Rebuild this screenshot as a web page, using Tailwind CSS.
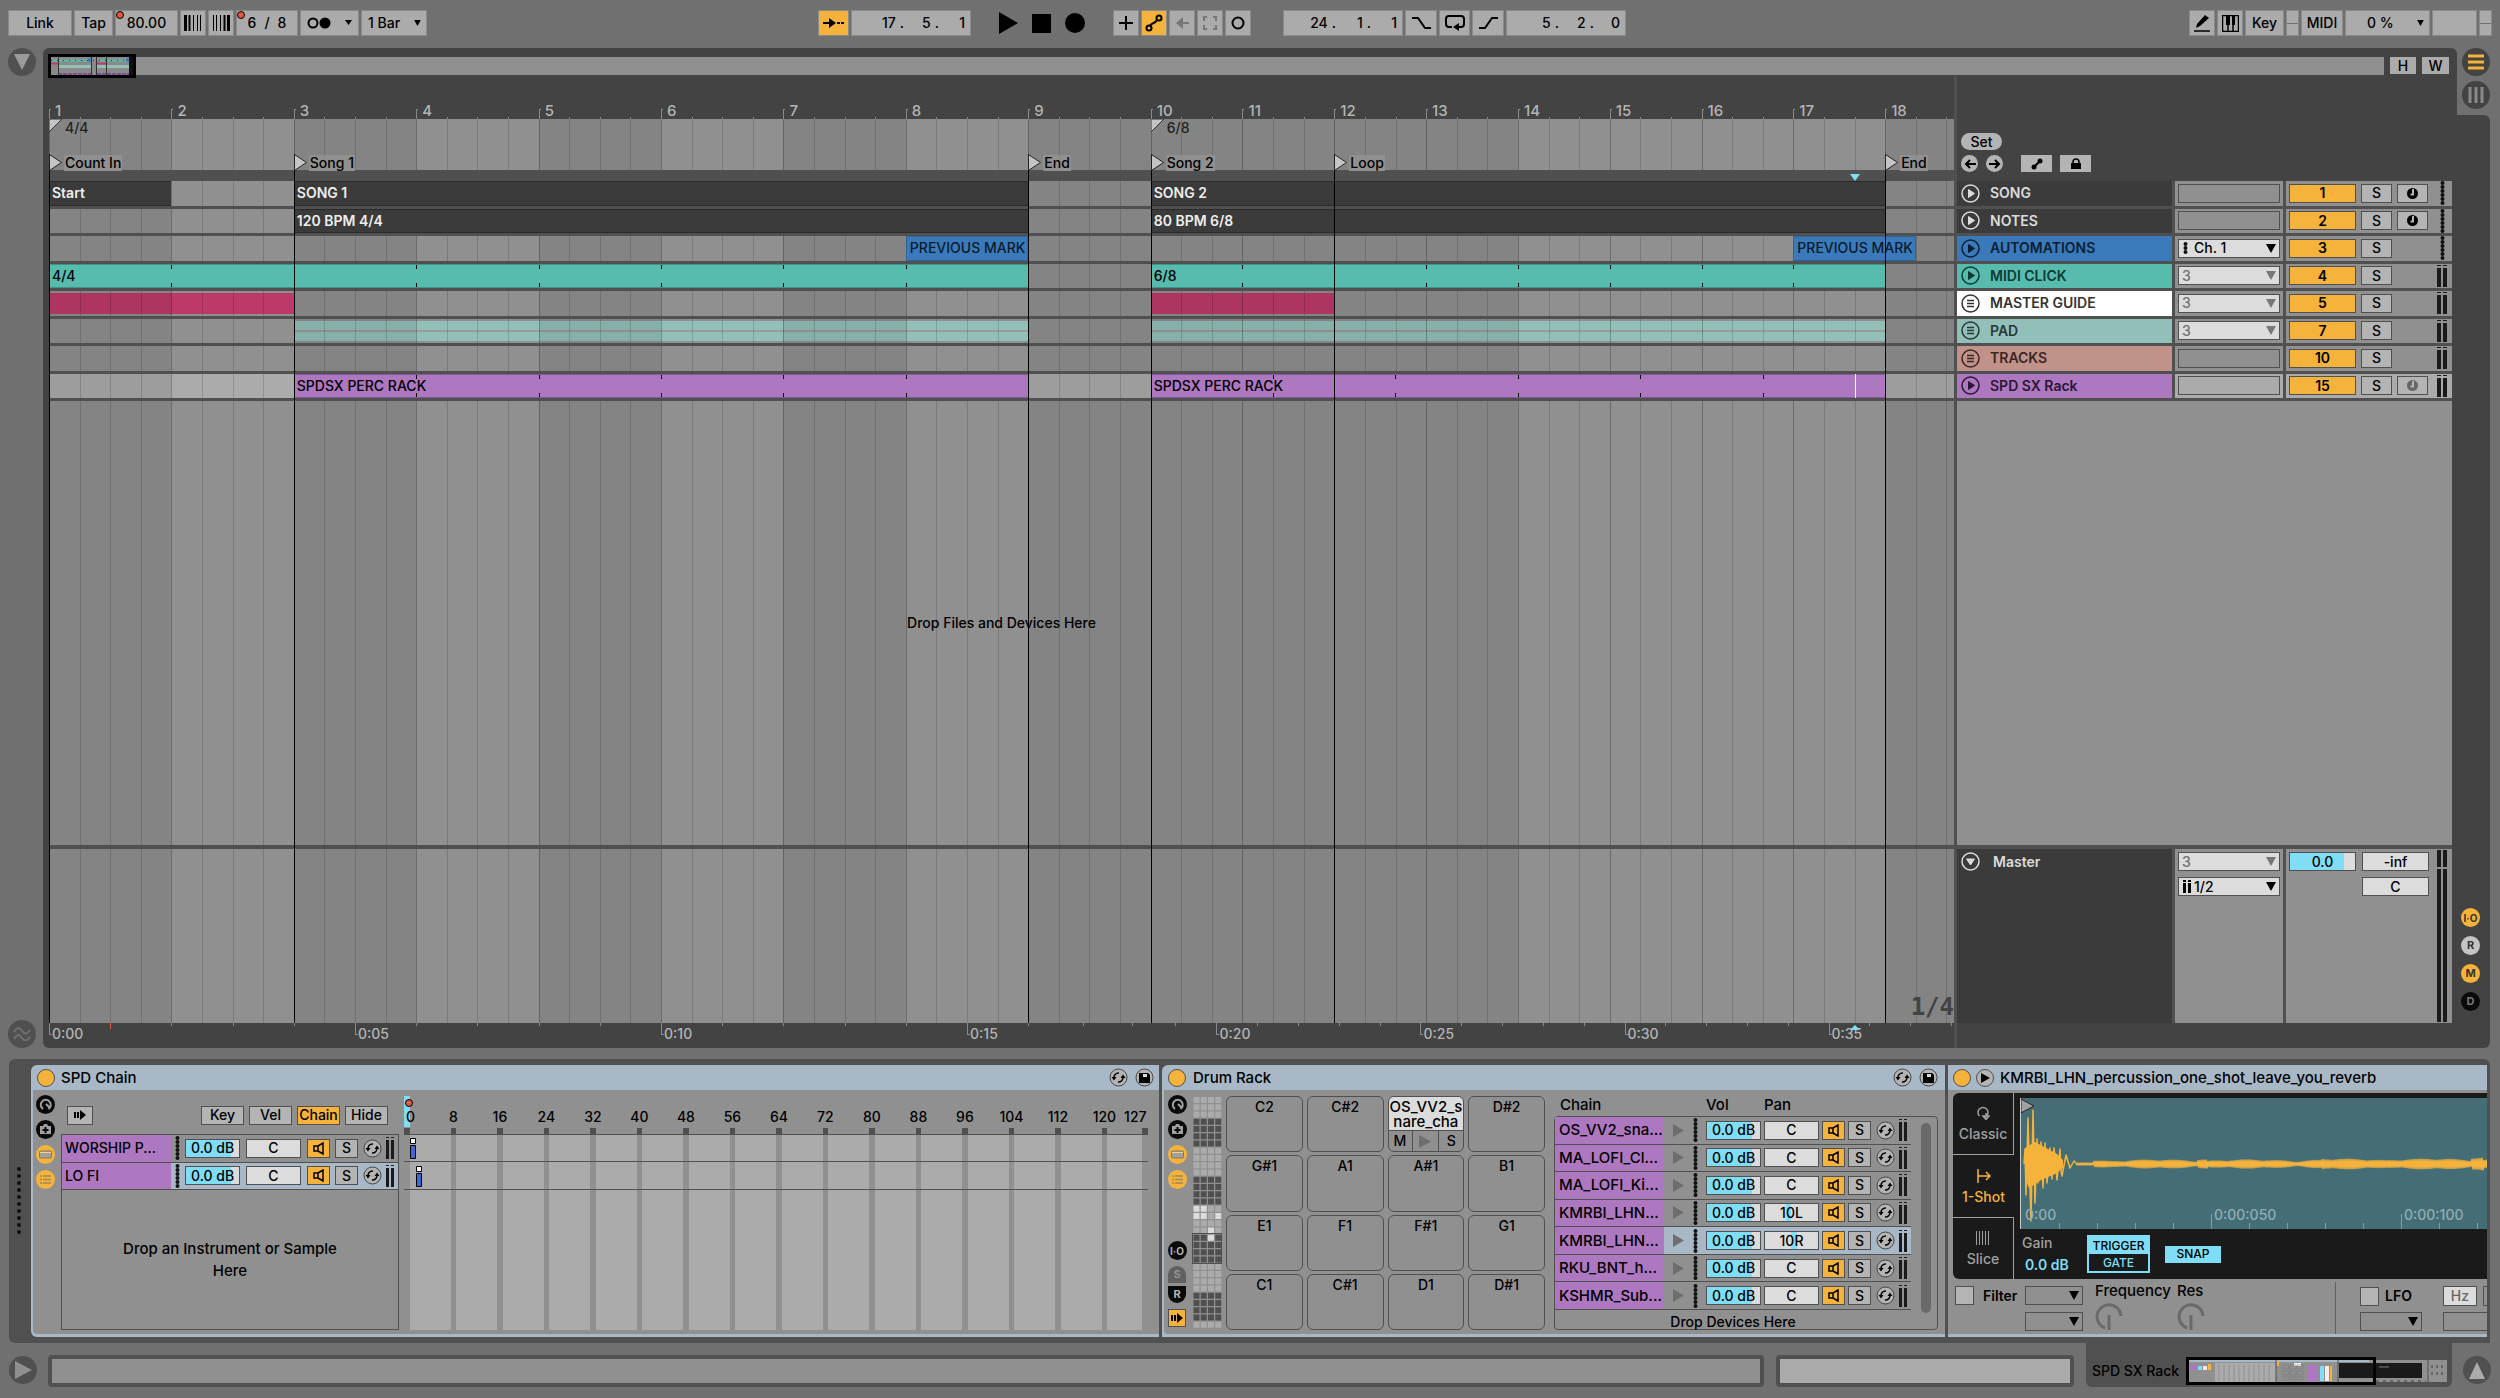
<!DOCTYPE html>
<html lang="en">
<head>
<meta charset="utf-8">
<title>SPD SX Rack</title>
<script src="https://cdn.jsdelivr.net/npm/@tailwindcss/browser@4"></script>
</head>
<body class="flex min-h-screen flex-col overflow-x-hidden bg-[#707070] font-['Inter',sans-serif] text-sm leading-5 font-medium text-black">

<header id="toolbar" class="flex h-12 items-start px-2 pt-[10px]"></header>

<main class="flex flex-1 pr-[10px]">
  <div class="flex w-[43px] flex-col items-center justify-between">
    <button aria-label="Show browser" class="flex size-7 items-center justify-center rounded-full bg-[#505050]"><svg width="16" height="16"><path d="M0 0h16L8 16z" fill="#9a9a9a"/></svg></button>
    <button aria-label="Groove pool" class="flex size-7 items-center justify-center rounded-full bg-[#505050]"><svg width="18" height="14" fill="none" stroke="#707070" stroke-width="2"><path d="M1 5c3-5 5-5 8-1s5 3 8-1M1 12c3-5 5-5 8-1s5 3 8-1"/></svg></button>
  </div>

  <section aria-label="Arrangement" class="flex min-w-0 flex-1 flex-col rounded-l-md rounded-tr-md bg-[#434343]">
    <div class="flex h-7 items-start gap-[6px] pt-[9px] pr-2 pl-[6px]">
      <div class="relative h-[18px] flex-1 bg-[#909090]">
        <div class="absolute -top-[3px] -left-px h-6 w-[88px] border-[3px] border-black bg-[#8a8a8a]">
          <svg class="block size-full" viewBox="0 0 82 18" preserveAspectRatio="none">
            <path d="M0 3.500h40M48 3.500h30" stroke="#57bcae" stroke-width="2"/>
            <path d="M0 3.500h78" stroke="#3b3b3b" stroke-dasharray="1 5"/>
            <path d="M0 6.500h7M46 6.500h10" stroke="#bd396a" stroke-width="2"/>
            <path d="M7 9.500h33M46 9.500h32" stroke="#93bfb9" stroke-width="3"/>
            <path d="M7 17h33M46 17h32" stroke="#7d4f8f" stroke-width="2" stroke-dasharray="4 1"/>
            <path d="M37 3h3M75 3h3" stroke="#3a7abb" stroke-width="3"/>
            <path d="M7.500 0v18M40.500 0v18M45.500 0v18M55.500 0v18" stroke="#333"/>
            <path d="M78 0h4v18h-4z" fill="#111"/>
          </svg>
        </div>
      </div>
      <button class="h-[17px] w-[26px] bg-[#ababab] leading-4">H</button>
      <button class="h-[17px] w-[27px] bg-[#ababab] leading-4">W</button>
    </div>
    <div class="flex flex-1">
      <div class="flex min-w-0 flex-1 flex-col pl-[6px]">
        <div id="ruler" class="relative h-[43px] text-[15px] text-[#b4b4b4]"></div>
        <div class="relative flex flex-1 flex-col overflow-hidden bg-[#909090]">
          <div id="grid" class="pointer-events-none absolute inset-0 z-10"></div>
          <div id="markers" class="pointer-events-none absolute inset-0 z-30"></div>
          <div class="h-[51px]"></div>
          <div class="relative z-20 h-[11px] bg-[#505050]"></div>
          <div id="lanes" class="grid h-[220px] grid-rows-8"></div>
          <div class="relative z-20 flex flex-1 items-center justify-center"><span>Drop Files and Devices Here</span></div>
          <div class="relative z-20 h-1 bg-[#505050]"></div>
          <div class="relative z-20 flex h-[174px] items-end justify-end pb-1 font-['DejaVu_Sans_Mono',monospace] text-2xl leading-6 font-bold text-[#434343]"><span>1/4</span></div>
        </div>
        <div id="seconds" class="relative h-[25px] text-[#b4b4b4]"></div>
      </div>

      <div class="flex w-[503px] flex-col border-l-[3px] border-[#505050] pr-[5px]">
        <div class="flex h-[105px] flex-col justify-end gap-[5px] pb-[9px] pl-1">
          <button class="h-[17px] w-[41px] rounded-full bg-[#b4b4b4] leading-4">Set</button>
          <div class="flex items-center">
            <button aria-label="Previous locator" class="mr-2 flex size-[17px] items-center justify-center rounded-full bg-[#b4b4b4]"><svg width="12" height="10" fill="none" stroke="#000" stroke-width="2"><path d="M12 5H2M6 1L2 5l4 4"/></svg></button>
            <button aria-label="Next locator" class="mr-[18px] flex size-[17px] items-center justify-center rounded-full bg-[#b4b4b4]"><svg width="12" height="10" fill="none" stroke="#000" stroke-width="2"><path d="M0 5h10M6 1l4 4-4 4"/></svg></button>
            <button aria-label="Automation mode" class="mr-[8px] flex h-[17px] w-[31px] items-center justify-center bg-[#b4b4b4]"><svg width="12" height="12"><path d="M3 9l6-6" stroke="#000" stroke-width="2"/><circle cx="3" cy="9" r="2.500"/><circle cx="9" cy="3" r="2.500"/></svg></button>
            <button aria-label="Lock envelopes" class="flex h-[17px] w-[31px] items-center justify-center bg-[#b4b4b4]"><svg width="12" height="12"><path d="M1 5h10v6H1z"/><path d="M3 6V4a3 3 0 0 1 6 0v2" fill="none" stroke="#000" stroke-width="1.500"/></svg></button>
          </div>
        </div>
        <div id="tracks" class="grid h-[220px] grid-rows-8 bg-[#505050]"></div>
        <div class="flex-1 bg-[#909090]"></div>
        <div class="h-1 bg-[#505050]"></div>
        <div id="master" class="flex h-[174px] gap-[3px] bg-[#505050]"></div>
        <div class="h-[25px]"></div>
      </div>
    </div>
  </section>

  <aside class="flex w-[33px] flex-col">
    <div class="flex h-[67px] flex-col items-end gap-[5px]">
      <button aria-label="Arrangement view" class="flex size-7 items-center justify-center rounded-full bg-[#434343]"><svg width="16" height="16"><path d="M0 2h16M0 8h16M0 14h16" stroke="#f6b33c" stroke-width="3"/></svg></button>
      <button aria-label="Session view" class="flex size-7 items-center justify-center rounded-full bg-[#434343]"><svg width="16" height="16"><path d="M2 0v16M8 0v16M14 0v16" stroke="#8a8a8a" stroke-width="3"/></svg></button>
    </div>
    <div class="flex flex-1 flex-col items-start justify-end gap-[9px] rounded-r-md bg-[#434343] pb-[37px] pl-1 text-[11px] leading-none font-bold text-[#333]">
      <button class="size-[19px] rounded-full bg-[#f6b33c] text-[10px]">I·O</button>
      <button class="size-[19px] rounded-full bg-[#c4c4c4]">R</button>
      <button class="size-[19px] rounded-full bg-[#f6b33c]">M</button>
      <button class="size-[19px] rounded-full bg-[#0a0a0a] text-[#777]">D</button>
    </div>
  </aside>
</main>

<section aria-label="Devices" class="mt-[11px] mr-[10px] ml-[9px] flex h-[284px] gap-[3px] overflow-hidden rounded-md rounded-br-none bg-[#505050] pt-[6px] pr-[3px] pb-[6px]">
  <div class="flex w-[19px] items-center justify-center"><svg width="4" height="68"><path d="M2 2v66" stroke="#111" stroke-width="4" stroke-linecap="round" stroke-dasharray="0 7"/></svg></div>

  <article class="flex min-w-0 flex-1 flex-col rounded-l-md bg-[#a8b8c6] pb-[3px] pl-[2px]">
    <div class="flex h-[25px] items-center pr-[5px] pl-[4px]">
      <button aria-label="Device on" class="mr-[6px] size-[18px] rounded-full border border-[#505050] bg-[#f6b33c]"></button>
      <h2 class="flex-1 text-[15px]">SPD Chain</h2>
      <span class="ico-swap mr-[7px] flex"></span><span class="ico-save flex"></span>
    </div>
    <div class="flex min-h-0 flex-1 rounded-bl bg-[#909090] pb-1">
      <div class="rail mr-[3px] flex w-[25px] flex-col items-center gap-[6px] pt-[5px]"></div>
      <div class="flex w-[338px] flex-col">
        <div class="flex h-11 items-center pr-[11px] pl-[6px] pb-[6px] pt-[12px]">
          <button aria-label="Auto select" class="mr-auto flex h-[19px] w-[26px] items-center justify-center border border-[#505050] bg-[#b4b4b4]"><svg width="12" height="10"><path d="M1 2v6M4 2v6" stroke="#000" stroke-width="2"/><path d="M6 0l6 5-6 5z"/></svg></button>
          <div class="flex gap-[5px]">
            <button class="h-[19px] w-[43px] border border-[#505050] bg-[#b4b4b4] leading-4">Key</button>
            <button class="h-[19px] w-[43px] border border-[#505050] bg-[#b4b4b4] leading-4">Vel</button>
            <button class="h-[19px] w-[43px] border border-[#505050] bg-[#f6b33c] leading-4">Chain</button>
            <button class="h-[19px] w-[43px] border border-[#505050] bg-[#b4b4b4] leading-4">Hide</button>
          </div>
        </div>
        <div class="flex flex-1 flex-col border border-[#505050]">
          <div id="chains1"></div>
          <div class="flex flex-1 items-center justify-center text-center text-[15px] leading-[22px]">Drop an Instrument or Sample<br>Here</div>
        </div>
      </div>
      <div id="zones" class="relative mr-[11px] ml-[5px] flex-1"></div>
    </div>
  </article>

  <article class="flex w-[783px] shrink-0 flex-col rounded-tl-md bg-[#a8b8c6] pb-[3px] pl-[2px]">
    <div class="flex h-[25px] items-center pr-[7px] pl-[4px]">
      <button aria-label="Device on" class="mr-[7px] size-[18px] rounded-full border border-[#505050] bg-[#f6b33c]"></button>
      <h2 class="flex-1 text-[15px]">Drum Rack</h2>
      <span class="ico-swap mr-[7px] flex"></span><span class="ico-save flex"></span>
    </div>
    <div class="flex min-h-0 flex-1 rounded-bl bg-[#909090] pb-1">
      <div class="mr-[2px] flex w-[26px] flex-col items-center">
        <div class="rail flex flex-col items-center gap-[6px] pt-[5px]"></div>
        <div class="mt-auto flex flex-col items-center pb-[3px] text-[11px] leading-none font-bold text-[#b4b4b4]">
          <button class="mb-[6px] size-[19px] rounded-full bg-[#0a0a0a] text-[10px]">I·O</button>
          <button class="mb-[3px] h-[17px] w-[18px] rounded-t-full bg-[#606060] text-[#909090]">S</button>
          <button class="mb-[6px] h-[17px] w-[18px] rounded-b-full bg-[#0a0a0a]">R</button>
          <button aria-label="Auto select" class="flex size-[18px] items-center justify-center border border-[#505050] bg-[#f6b33c]"><svg width="12" height="10"><path d="M1 2v6M4 2v6" stroke="#000" stroke-width="2"/><path d="M6 0l6 5-6 5z"/></svg></button>
        </div>
      </div>
      <svg id="padmap" class="mt-[6px] mr-[4px]" width="30" height="235"></svg>
      <div id="pads" class="mt-[6px] grid w-[319px] grid-cols-4 grid-rows-4 gap-x-1 gap-y-[3px] text-center"></div>
      <div class="ml-[9px] flex w-[384px] flex-col">
        <div class="flex h-[26px] items-center pt-1 pl-[6px] text-[15px]"><span class="w-[146px]">Chain</span><span class="w-[58px]">Vol</span><span>Pan</span></div>
        <div class="flex min-h-0 flex-1 rounded border border-[#505050]">
          <div class="w-[356px]"><div id="chains2"></div><div class="pt-1 text-center leading-4">Drop Devices Here</div></div>
          <div class="mt-[6px] ml-[10px] h-[190px] w-[10px] rounded-full bg-[#6a6a6a]"></div>
        </div>
      </div>
    </div>
  </article>

  <article class="flex w-[539px] shrink-0 flex-col bg-[#a8b8c6] pb-[3px]">
    <div class="flex h-[25px] items-center pl-[5px]">
      <button aria-label="Device on" class="mr-[5px] size-[18px] rounded-full border border-[#505050] bg-[#f6b33c]"></button>
      <button aria-label="Preview" class="mr-[6px] flex size-[18px] items-center justify-center rounded-full border border-[#505050] bg-[#b4b4b4]"><svg width="9" height="10"><path d="M0 0l9 5-9 5z"/></svg></button>
      <h2 class="text-[15px] whitespace-nowrap">KMRBI_LHN_percussion_one_shot_leave_you_reverb</h2>
    </div>
    <div class="flex min-h-0 flex-1 flex-col bg-[#909090] pt-[3px] pl-[5px]">
      <div class="flex h-[186px] rounded-l-md bg-[#1a1a1a] text-[#a0a0a0]">
        <div class="grid w-[61px] grid-rows-3 text-center">
          <button class="flex flex-col items-center justify-center gap-1 border-r border-b border-[#a0a0a0] pt-[3px]"><svg width="14" height="14" fill="none" stroke="#a0a0a0" stroke-width="1.500"><path d="M3.500 10a5 5 0 1 1 7 0H6M10 7v3l-1 3M7 10h6l-3 3.500z"/></svg>Classic</button>
          <button class="flex flex-col items-center justify-center gap-1 pt-[3px] text-[#f6b33c]"><svg width="14" height="14" fill="none" stroke="#f6b33c" stroke-width="1.500"><path d="M1 0v14M1 7h11M9 3l4 4-4 4"/></svg>1-Shot</button>
          <button class="flex flex-col items-center justify-center gap-1 border-t border-r border-[#a0a0a0] pt-[3px]"><svg width="14" height="14" stroke="#a0a0a0"><path d="M.500 0v14M3.500 0v14M6.500 0v14M9.500 0v14M12.500 0v14"/></svg>Slice</button>
        </div>
        <div class="flex min-w-0 flex-1 flex-col pt-[5px] pl-[6px]">
          <svg id="wave" class="block border-l border-[#ccc] bg-[#456d76]" width="467" height="131"></svg>
          <div class="flex flex-1 items-center pl-[2px]">
            <label class="flex w-[65px] flex-col gap-[2px]"><span>Gain</span><input value="0.0 dB" class="w-[60px] bg-transparent pl-[3px] font-semibold text-[#7fddf5]"></label>
            <div class="mr-[15px] flex h-[38px] w-[63px] flex-col border-2 border-[#7fddf5] text-xs leading-none">
              <button class="flex-1 bg-[#7fddf5] text-black">TRIGGER</button>
              <button class="flex-1 text-[#7fddf5]">GATE</button>
            </div>
            <button class="h-[17px] w-14 bg-[#7fddf5] text-xs leading-none text-black">SNAP</button>
          </div>
        </div>
      </div>
      <div class="flex flex-1 pt-[7px] pl-[2px]">
        <label class="flex h-[19px] w-[70px] items-center gap-[9px] font-semibold"><input type="checkbox" class="size-[19px] appearance-none border border-[#505050] bg-[#b4b4b4]">Filter</label>
        <div id="filtersel" class="mr-3 flex flex-col gap-[7px]"></div>
        <div class="flex w-[82px] flex-col text-[15px]"><span class="-mt-[5px]">Frequency</span><svg width="28" height="30" fill="none" stroke="#6a6a6a" stroke-width="3"><path d="M10 27a12 12 0 1 1 16-12M14 14v15"/></svg></div>
        <div class="flex flex-col text-[15px]"><span class="-mt-[5px]">Res</span><svg width="28" height="30" fill="none" stroke="#6a6a6a" stroke-width="3"><path d="M10 27a12 12 0 1 1 16-12M14 14v15"/></svg></div>
        <div class="-mt-1 mr-6 ml-auto w-px bg-[#606060]"></div>
        <div class="flex w-[83px] flex-col gap-[6px]"><label class="flex h-5 items-center gap-[6px] font-semibold"><input type="checkbox" class="size-[19px] appearance-none border border-[#505050] bg-[#b4b4b4]">LFO</label><div id="lfosel"></div></div>
        <div class="flex w-[44px] flex-col gap-[6px] overflow-hidden">
          <div class="flex gap-[6px]"><button class="h-5 w-[34px] shrink-0 border border-[#505050] bg-[#dcdcdc] leading-4 text-[#666]">Hz</button><button aria-label="Sync" class="h-5 w-5 shrink-0 border border-[#505050]"></button></div>
          <input aria-label="LFO rate" class="h-[19px] w-20 border border-[#505050]">
        </div>
      </div>
    </div>
  </article>
</section>

<footer class="flex h-[55px] items-start pr-[9px] pl-[9px]">
  <button aria-label="Show help" class="mt-[13px] flex size-7 items-center justify-center rounded-full bg-[#505050]"><svg width="17" height="18"><path d="M0 0l17 9-17 9z" fill="#909090"/></svg></button>
  <div class="mt-3 ml-[11px] h-8 flex-1 rounded border-4 border-[#505050] bg-[#909090]"></div>
  <div class="mt-3 ml-3 h-8 w-[298px] rounded border-4 border-[#505050] bg-[#ababab]"></div>
  <div class="ml-3 flex h-11 w-[366px] items-center rounded-b-md bg-[#505050] pt-[12px] pl-[6px]">
    <span class="w-[94px]">SPD SX Rack</span>
    <svg width="261" height="28">
      <path d="M3 3h258v22H3z" fill="#909090"/><path d="M3 3h180v2H3z" fill="#a8b8c6"/>
      <path d="M29 6h61v19H29z" fill="#ababab"/>
      <path d="M33 8v17M38 8v17M43 8v17M48 8v17M53 8v17M58 8v17M63 8v17M68 8v17M73 8v17M78 8v17M83 8v17" stroke="#909090"/>
      <path d="M3 8h8v5H3zM122 8h9v17h-9z" fill="#ad78c0"/>
      <path d="M12 9h4v4h-4zM134 9h4v15h-4zM163 18h7v2h-7z" fill="#7fddf5"/>
      <path d="M17 9h4v4h-4zM139 9h4v15h-4zM108 6h7v3h-7z" fill="#eee"/>
      <path d="M22 7h3v6h-3zM144 9h2v15h-2zM91 4h2v5h-2zM218 18h7v1h-7zM228 18h5v1h-5z" fill="#f6b33c"/>
      <path d="M97 8h6v4h-6zM104 8h6v4h-6zM111 8h6v4h-6zM97 14h6v4h-6zM104 14h6v4h-6zM111 14h6v4h-6zM97 20h6v3h-6zM104 20h6v3h-6zM111 20h6v3h-6z" fill="none" stroke="#777" stroke-width=".5"/>
      <path d="M153 6h83v15h-83z" fill="#1a1a1a"/><path d="M193 10h10" stroke="#777"/>
      <path d="M90 3v22M152 3v22M242 3v22" stroke="#505050"/>
      <path d="M190 24h50M246 8v14M251 8v14M256 8v14" stroke="#666" stroke-width="2" stroke-dasharray="3 4"/>
      <path d="M1.500 1.500h187v25h-187z" fill="none" stroke="#000" stroke-width="3"/>
    </svg>
  </div>
  <button aria-label="Hide device view" class="mt-[13px] ml-[11px] flex size-7 items-center justify-center rounded-full bg-[#505050]"><svg width="16" height="17"><path d="M8 0l8 17H0z" fill="#ababab"/></svg></button>
</footer>

<script>
const $ = id => document.getElementById(id);
const caret = (c = '#000', w = 10) => `<svg width="${w}" height="${w - 1}" viewBox="0 0 10 9"><path d="M0 0h10L5 9z" fill="${c}"/></svg>`;

/* ---------- control bar ---------- */
const btn = (cls, label, inner) => `<button ${label ? `aria-label="${label}"` : ''} class="relative flex h-[26px] items-center justify-center border border-[#8a8a8a] ${cls}">${inner}</button>`;
const G = 'bg-[#ababab]', O = 'bg-[#f6b33c]';
const icon = (d, w = 18, h = 18, sw = 2, c = '#000') => `<svg width="${w}" height="${h}" fill="none" stroke="${c}" stroke-width="${sw}"><path d="${d}"/></svg>`;
const dot = '<span class="absolute top-0 left-0 size-2 rounded-full border border-black bg-[#e5573f]"></span>';
const drop = (cls, label, text) => `<div class="relative flex h-[26px] items-center border border-[#8a8a8a] bg-[#ababab] ${cls}"><select aria-label="${label}" class="size-full appearance-none px-[6px]"><option>${text}</option></select><span class="pointer-events-none absolute right-[5px]">${caret('#000', 7)}</span></div>`;
const unit = (n, w, p = '.') => `<span class="flex ${w} justify-end gap-1"><span>${n}</span>${p ? `<span>${p}</span>` : ''}</span>`;
const pos = (label, a, b, c) => `<div role="group" aria-label="${label}" class="flex h-[26px] w-[120px] items-center justify-end border border-[#8a8a8a] bg-[#ababab] pr-[5px]">${unit(a, 'w-[35px]')}${unit(b, 'w-[35px]')}${unit(c, 'w-[26px]', '')}</div>`;
$('toolbar').innerHTML = `
<div class="flex flex-1 gap-[2px]">
  ${btn('w-[64px] ' + G, '', 'Link')}${btn('w-[39px] ' + G, '', 'Tap')}${btn('w-[63px] ' + G, 'Tempo', dot + '80.00')}
  ${btn('w-[26px] ' + G, 'Nudge down', '<svg width="18" height="16" stroke="#000"><path d="M1.500 0v16" stroke-width="3"/><path d="M5.500 0v16" stroke-width="2"/><path d="M9.500 0v16M13.500 0v16M16.500 0v16"/></svg>')}
  ${btn('w-[26px] ' + G, 'Nudge up', '<svg width="18" height="16" stroke="#000"><path d="M16.500 0v16" stroke-width="3"/><path d="M12.500 0v16" stroke-width="2"/><path d="M8.500 0v16M4.500 0v16M1.500 0v16"/></svg>')}
  ${btn('w-[62px] gap-2 ' + G, 'Time signature', dot + '<span>6</span><span>/</span><span>8</span>')}
  ${btn('w-[59px] ' + G, 'Metronome', '<svg width="46" height="12"><circle cx="6" cy="6" r="4.500" fill="none" stroke="#000" stroke-width="2"/><circle cx="18" cy="6" r="5.500"/><path d="M38 3h7l-3.500 5z"/></svg>')}
  ${drop('w-[66px]', 'Quantization', '1 Bar')}
</div>
<div class="flex items-start pr-14">
  ${btn('w-[31px] mr-[2px] ' + O, 'Follow', '<svg width="22" height="12"><path d="M0 5h6V1l7 5-7 5V7H0zM14 5h3v2h-3zM18 5h3v2h-3z"/></svg>')}
  ${pos('Position', 17, 5, 1)}
  <div class="mr-[28px] ml-[28px] flex h-[26px] items-center gap-[14px]">
    <button aria-label="Play"><svg class="block" width="19" height="22"><path d="M0 0l19 11L0 22z"/></svg></button>
    <button aria-label="Stop"><svg class="block" width="19" height="19"><path d="M0 0h19v19H0z"/></svg></button>
    <button aria-label="Record"><svg class="block" width="20" height="20"><circle cx="10" cy="10" r="10"/></svg></button>
  </div>
  <div class="mr-8 flex gap-[2px]">
    ${btn('w-[26px] ' + G, 'Overdub', icon('M7 0v14M0 7h14', 14, 14))}
    ${btn('w-[26px] ' + O, 'Automation arm', '<svg width="18" height="18" fill="none" stroke="#000" stroke-width="2"><circle cx="4" cy="14" r="2.500"/><circle cx="14" cy="4" r="2.500"/><path d="M5 12c2-4 5-2 7-6"/></svg>')}
    ${btn('w-[26px] ' + G, 'Re-enable automation', '<svg width="13" height="12"><path d="M4 6h9" stroke="#777" stroke-width="2"/><path d="M0 6l7-6v12z" fill="#777"/></svg>')}
    ${btn('w-[26px] ' + G, 'Capture', icon('M1 5V1h3M10 1h3v4M13 9v4h-3M4 13H1V9', 14, 14, 2, '#777'))}
    ${btn('w-[26px] ' + G, 'Session record', '<svg width="14" height="14"><circle cx="7" cy="7" r="5.500" fill="none" stroke="#000" stroke-width="2"/></svg>')}
  </div>
  <div class="flex gap-[2px]">
    ${pos('Loop start', 24, 1, 1)}
    ${btn('w-[32px] ' + G, 'Punch in', icon('M0 3h6l7 10h6', 19, 16))}
    ${btn('w-[31px] ' + G, 'Loop', '<svg width="20" height="18"><path d="M7 13H4a3 3 0 0 1-3-3V5a3 3 0 0 1 3-3h12a3 3 0 0 1 3 3v5a3 3 0 0 1-3 3h-2" fill="none" stroke="#000" stroke-width="2"/><path d="M14 9v8l-6-4z"/></svg>')}
    ${btn('w-[32px] ' + G, 'Punch out', icon('M0 13h6l7-10h6', 19, 16))}
    ${pos('Loop length', 5, 2, 0)}
  </div>
</div>
<div class="flex flex-1 justify-end gap-[2px]">
  ${btn('w-[26px] ' + G, 'Draw mode', '<svg width="18" height="18"><path d="M3 14l1-4L12 1l4 3-9 8z"/><path d="M1 17h16" stroke="#000" stroke-width="1.500"/></svg>')}
  ${btn('w-[26px] ' + G, 'Computer MIDI keyboard', '<svg width="17" height="17"><path d="M.500 .500h16v16H.500zM6 0v17M11 0v17" fill="none" stroke="#000" stroke-width="1.500"/><path d="M4 0h4v10H4zM10 0h3v10h-3z"/></svg>')}
  ${btn('w-[39px] ' + G, '', 'Key')}
  <div class="flex h-[26px] w-[13px] flex-col border border-[#8a8a8a] bg-[#ababab]"><div class="flex-1 border-b border-[#707070]"></div><div class="flex-1"></div></div>
  ${btn('w-[42px] ' + G, '', 'MIDI')}
  <div class="relative flex h-[26px] w-[85px] items-center border border-[#8a8a8a] bg-[#ababab]"><select aria-label="CPU load" class="size-full appearance-none pl-[21px]"><option>0 %</option></select><span class="pointer-events-none absolute right-[5px]">${caret('#000', 7)}</span></div>
  <div class="h-[26px] w-[45px] border border-[#8a8a8a] bg-[#ababab]"></div>
  <div class="flex h-[26px] w-[13px] flex-col border border-[#8a8a8a] bg-[#ababab]"><div class="flex-1 border-b border-[#707070]"></div><div class="flex-1"></div></div>
</div>`;

/* ---------- timeline: positions are in quarter notes ---------- */
const SPAN = 62.25, P = q => (q / SPAN * 100) + '%';
const bars = [];
for (let b = 1; b <= 18; b++) bars.push([b, b <= 10 ? (b - 1) * 4 : 36 + (b - 10) * 3]);
let r = '';
for (let q = 0; q <= 62; q++) r += `<i class="absolute bottom-0 h-[2px] w-px bg-[#8a8a8a]" style="left:${P(q)}"></i>`;
for (const [b, q] of bars) r += `<div class="absolute bottom-0 flex h-[10px] items-end" style="left:${P(q)}"><i class="h-[10px] w-[2px] border-t border-l border-[#8a8a8a]"></i><span class="ml-1 leading-4">${b}</span></div>`;
$('ruler').innerHTML = r;

let g = '';
for (const [a, b] of [[0, 4], [8, 12], [16, 20], [24, 28], [32, 48], [60, SPAN]]) g += `<i class="absolute inset-y-0 bg-black/8" style="left:${P(a)};width:${P(b - a)}"></i>`;
for (let q = 0; q <= 62; q++) g += `<i class="absolute inset-y-0 w-px ${bars.some(x => x[1] === q) ? 'bg-black/25' : 'bg-black/15'}" style="left:${P(q)}"></i>`;
$('grid').innerHTML = g;

let m = '';
for (const [q, t] of [[0, '4/4'], [36, '6/8']]) m += `<div class="absolute top-0 flex" style="left:${P(q)}"><svg width="16" height="14"><path d="M0 0h13L0 13z" fill="#c4c4c4" stroke="#333"/></svg><span class="-mt-px text-[#222]">${t}</span></div>`;
for (const [q, t] of [[0, 'Count In'], [8, 'Song 1'], [32, 'End'], [36, 'Song 2'], [42, 'Loop'], [60, 'End']])
  m += `<i class="absolute top-[35px] bottom-0 w-px bg-black" style="left:${P(q)}"></i><div class="absolute top-[35px] flex items-center whitespace-nowrap" style="left:${P(q)}"><svg width="14" height="17"><path d="M.500 .500l12 8-12 8z" fill="#c4c4c4" stroke="#222"/></svg><span class="ml-px bg-[#909090] pr-px pl-px leading-4">${t}</span></div>`;
m += `<svg class="absolute top-[55px] -translate-x-1/2" style="left:${P(59)}" width="10" height="7"><path d="M0 0h10L5 7z" fill="#7fddf5"/></svg>`;
$('markers').innerHTML = m;

const C = {
  dark: 'bg-[#3b3b3b] border-y border-[#2a2a2a] text-[#eee] font-semibold z-20',
  blue: 'bg-[#3a7abb] border border-[#2c649c] text-[#0a1a2a] z-20',
  teal: 'bg-[#57bcae] border-y border-[#3f9488] z-20',
  purple: 'bg-[#ad78c0] border-y border-[#84589a] z-20',
  pink: 'my-[2px] bg-[#bd396a]',
  pad: 'my-[2px] bg-[linear-gradient(#93bfb9_47%,#9a9a9a_47%,#9a9a9a_55%,#93bfb9_55%)]'
};
const fourths = a => a.map(b => b * 4);
const lanes = [
  [[0, 4, 'dark', 'Start'], [8, 32, 'dark', 'SONG 1'], [36, 60, 'dark', 'SONG 2']],
  [[8, 32, 'dark', '120 BPM 4/4'], [36, 60, 'dark', '80 BPM 6/8']],
  [[28, 32, 'blue', 'PREVIOUS MARK'], [57, 61, 'blue', 'PREVIOUS MARK']],
  [[0, 32, 'teal', '4/4', fourths([1, 2, 3, 4, 5, 6, 7])], [36, 60, 'teal', '6/8', [39, 45, 48, 51, 54, 57]]],
  [[0, 8, 'pink', ''], [36, 42, 'pink', '']],
  [[8, 32, 'pad', ''], [36, 60, 'pad', '']],
  [],
  [[8, 32, 'purple', 'SPDSX PERC RACK', fourths([3, 4, 5, 6, 7])], [36, 60, 'purple', 'SPDSX PERC RACK', [40, 44, 48, 52, 56]]]
];
$('lanes').innerHTML = lanes.map((clips, i) => `<div class="relative flex flex-col ${i === 7 ? 'bg-[#ababab]' : ''}">
  <div class="relative flex-1">${clips.map(([a, b, k, t, ticks = []]) => `<div class="absolute inset-y-0 flex items-center overflow-hidden whitespace-nowrap pl-[3px] ${C[k]}" style="left:${P(a)};width:${P(b - a)}">${t}${ticks.map(q => `<i class="absolute inset-y-0 w-px border-y-4 border-black" style="left:${(q - a) / (b - a) * 100}%"></i>`).join('')}</div>`).join('')}
  ${i === 7 ? `<i class="absolute inset-y-0 z-30 w-px bg-white" style="left:${P(59)}"></i>` : ''}</div>
  <div class="relative z-20 h-[3px] bg-[#505050]"></div></div>`).join('');

/* seconds ruler: 120 BPM up to bar 9, easing into 80 BPM */
const secPos = s => s <= 16 ? s * 2 : s < 20 ? [33.8, 35.4, 36.8][s - 17] : 38.15 + (s - 20) * 4 / 3;
let sr = '';
for (let s = 0; s <= 38; s++) sr += s % 5
  ? `<i class="absolute top-0 w-px ${s === 1 ? 'h-[6px] bg-[#e5573f]' : 'h-[3px] bg-[#8a8a8a]'}" style="left:${P(secPos(s))}"></i>`
  : `<div class="absolute top-0 flex" style="left:${P(secPos(s))}"><i class="h-[12px] w-[3px] border-b border-l border-[#8a8a8a]"></i><span class="pt-px">0:${String(s).padStart(2, '0')}</span></div>`;
sr += `<svg class="absolute top-[2px] -translate-x-1/2" style="left:${P(59)}" width="10" height="5"><path d="M0 5h10L5 0z" fill="#7fddf5"/></svg>`;
$('seconds').innerHTML = sr;

/* ---------- track headers ---------- */
const beads = n => `<svg width="5" height="${n * 4}"><path d="M2.500 2v${n * 4 - 3}" stroke="#111" stroke-width="4" stroke-linecap="round" stroke-dasharray="0 4"/></svg>`;
const meter = '<svg width="10" height="22"><path d="M0 0h4v1H0zM6 0h4v1H6zM0 3h4v19H0zM6 3h4v19H6z" fill="#1a1a1a"/></svg>';
const box = (cls, t, label = t) => `<button aria-label="${label}" class="flex h-[19px] items-center justify-center border border-[#505050] ${cls}">${t}</button>`;
const io = (t, off, lead = '') => `<div class="relative flex h-[19px] w-[102px] items-center border border-[#505050] bg-[#dcdcdc] ${off ? 'text-[#707070]' : 'text-black'}">${lead ? `<span class="absolute left-1 flex">${lead}</span>` : ''}<select aria-label="Output" class="h-[17px] w-full appearance-none leading-4 ${lead ? 'pl-[15px]' : 'pl-[3px]'}"><option>${t}</option></select><span class="pointer-events-none absolute right-[3px] flex">${caret(off ? '#777' : '#000')}</span></div>`;
const arm = c => `<svg width="11" height="11"><circle cx="5.500" cy="5.500" r="5.500" fill="${c}"/><path d="M6 1v5.500H3.500" stroke="#b4b4b4" stroke-width="2" fill="none"/></svg>`;
const T = [
  ['SONG', 'bg-[#3b3b3b] text-[#dcdcdc]', 1, 'midi', '', '#000'], ['NOTES', 'bg-[#3b3b3b] text-[#dcdcdc]', 2, 'midi', '', '#000'],
  ['AUTOMATIONS', 'bg-[#3a7abb] text-[#0a1f33]', 3, 'midi', 'ch'], ['MIDI CLICK', 'bg-[#57bcae] text-[#0f3a34]', 4, 'audio', '3'],
  ['MASTER GUIDE', 'bg-white text-[#333]', 5, 'audio', '3', '', 1], ['PAD', 'bg-[#93bfb9] text-[#263a37]', 7, 'audio', '3', '', 1],
  ['TRACKS', 'bg-[#c0928a] text-[#3a2724]', 10, 'audio', '', '', 1], ['SPD SX Rack', 'bg-[#ad78c0] text-[#2c1735]', 15, 'audio', '', '#666']
];
const tIcon = d => `<svg width="19" height="19" fill="none" stroke="currentColor"><circle cx="9.500" cy="9.500" r="8.500" stroke-width="1.500"/><path d="${d}" ${d.includes('z') ? 'fill="currentColor"' : 'stroke-width="1.500"'}/></svg>`;
$('tracks').innerHTML = T.map(([n, c, num, kind, out, a, group], i) => {
  const bg = i === 7 ? 'bg-[#ababab]' : 'bg-[#909090]';
  return `<div class="flex gap-[3px] pb-[3px]">
  <div class="flex w-[215px] items-center gap-[10px] pl-1 font-semibold ${c}">${tIcon(group ? 'M6 6.500h7M6 9.500h7M6 12.500h7' : 'M7.500 5.500l6 4-6 4z')}<span>${n}</span></div>
  <div class="flex w-[108px] items-center pl-[3px] ${bg}">${out === 'ch' ? io('Ch. 1', 0, beads(3)) : out ? io(out, 1) : '<div class="h-[19px] w-[102px] border border-[#505050]"></div>'}</div>
  <div class="flex flex-1 items-center pl-[3px] ${bg}">${box('w-[67px] mr-[5px] bg-[#f6b33c] font-semibold', num, 'Track ' + num)}${box('w-[31px] mr-[5px] bg-[#b4b4b4]', 'S', 'Solo ' + n)}<div class="w-[31px]">${a ? box('w-[31px] bg-[#b4b4b4]', arm(a), 'Arm ' + n) : ''}</div>
  <div class="ml-auto flex w-[20px] justify-center">${kind === 'midi' ? beads(6) : meter}</div></div></div>`;
}).join('');
$('master').innerHTML = `
<div class="flex w-[215px] items-start gap-[13px] bg-[#3b3b3b] pt-[3px] pl-1 font-semibold text-[#dcdcdc]">${tIcon('M5.500 7h8l-4 6z')}<span>Master</span></div>
<div class="flex w-[108px] flex-col gap-[6px] bg-[#909090] pt-[3px] pl-[3px]">${io('3', 1)}${io('1/2', 0, '<svg width="8" height="13"><path d="M0 0h3v2H0zM5 0h3v2H5zM0 3h3v10H0zM5 3h3v10H5z"/></svg>')}</div>
<div class="flex flex-1 items-start bg-[#909090] pt-[3px] pl-[3px]">${box('w-[67px] mr-[6px] bg-[linear-gradient(to_right,#7fddf5_83%,#dcdcdc_83%)]', '0.0', 'Master volume')}
<div class="flex flex-col gap-[6px]">${box('w-[67px] bg-[#dcdcdc]', '-inf', 'Peak level')}${box('w-[67px] bg-[#dcdcdc]', 'C', 'Master pan')}</div>
<div class="-mt-[2px] ml-auto mr-[5px] flex gap-[2px]"><div class="h-[172px] w-1 bg-[linear-gradient(#1a1a1a_17px,#909090_17px,#909090_19px,#1a1a1a_19px)]"></div><div class="h-[172px] w-1 bg-[linear-gradient(#1a1a1a_17px,#909090_17px,#909090_19px,#1a1a1a_19px)]"></div></div></div>`;

/* ---------- devices ---------- */
const swap = '<button aria-label="Hot-swap" class="block shrink-0"><svg class="block" width="19" height="19"><circle cx="9.500" cy="9.500" r="8.500" fill="#b4b4b4" stroke="#444"/><path d="M5 10a4.500 4.500 0 0 1 5-5M14 9a4.500 4.500 0 0 1-5 5" fill="none" stroke="#000" stroke-width="1.500"/><path d="M2.500 9h5L5 12.500zM11.500 10h5L14 6.500z"/></svg></button>';
const save = '<button aria-label="Save preset" class="block"><svg class="block" width="19" height="19"><circle cx="9.500" cy="9.500" r="8.500" fill="#b4b4b4" stroke="#444"/><path d="M4 5h9l2 2v8H4z"/><path d="M8 6h4v3H8z" fill="#ddd"/></svg></button>';
document.querySelectorAll('.ico-swap').forEach(e => e.innerHTML = swap);
document.querySelectorAll('.ico-save').forEach(e => e.innerHTML = save);
const rail = [
  ['Macros', '<circle cx="9.500" cy="9.500" r="9.500" fill="#0a0a0a"/><path d="M7 14a5 5 0 1 1 5.500 0M10 9l4 4" fill="none" stroke="#a0a0a0" stroke-width="2"/>'],
  ['Variations', '<circle cx="9.500" cy="9.500" r="9.500" fill="#0a0a0a"/><path d="M4 6h3l1-2h3l1 2h3v8H4z" fill="#a0a0a0"/><path d="M9.500 7v6M6.500 10h6" stroke="#0a0a0a" stroke-width="2"/>'],
  ['Chain devices', '<circle cx="9.500" cy="9.500" r="9.500" fill="#f6b33c"/><rect x="3.500" y="6" width="12" height="7" rx="1" fill="#a0a0a0" stroke="#8f7a4a"/><path d="M4 7.500h11" stroke="#f6d58c"/>'],
  ['Chain list', '<circle cx="9.500" cy="9.500" r="9.500" fill="#f6b33c"/><path d="M4 6h2M7 6h8M4 9.500h2M7 9.500h8M4 13h2M7 13h8" stroke="#a08a58" stroke-width="1.500"/>']
];
document.querySelectorAll('.rail').forEach(e => e.innerHTML = rail.map(([n, s]) => `<button aria-label="${n}"><svg class="block" width="19" height="19">${s}</svg></button>`).join(''));

const spk = '<svg width="12" height="13" fill="none" stroke="#000" stroke-width="1.500"><path d="M1 4h4v5H1zM5 4l5-3v11L5 9"/></svg>';
const pans = { C: 'bg-[#dcdcdc]', '10L': 'bg-[linear-gradient(to_right,#dcdcdc_39%,#7fddf5_39%,#7fddf5_50%,#dcdcdc_50%)]', '10R': 'bg-[linear-gradient(to_right,#dcdcdc_50%,#7fddf5_50%,#7fddf5_61%,#dcdcdc_61%)]' };
const chain = (n, pan, sel, drum) => `<div class="flex h-full items-center border-b border-[#505050] ${sel ? 'bg-[#a8b8c6]' : ''}">
  <span class="flex h-full w-[109px] shrink-0 items-center overflow-hidden bg-[#ad78c0] whitespace-nowrap ${drum ? 'pl-1 text-[15px]' : 'pl-[3px]'}">${n}</span>
  ${drum ? `<button aria-label="Preview ${n}" class="ml-[9px]"><svg class="block" width="11" height="13"><path d="M0 0l11 6.500L0 13z" fill="#6e6e6e"/></svg></button><span class="ml-[9px]">${beads(6)}</span>` : `<span class="ml-1">${beads(6)}</span>`}
  <input aria-label="Volume ${n}" value="0.0 dB" class="h-[19px] w-[55px] border border-[#505050] bg-[linear-gradient(to_right,#7fddf5_85%,#dcdcdc_85%)] pl-[5px] ${drum ? 'ml-[8px] mr-[3px]' : 'ml-[5px] mr-[6px]'}">
  <input aria-label="Pan ${n}" value="${pan}" class="h-[19px] w-[55px] border border-[#505050] text-center ${pans[pan]} ${drum ? 'mr-[3px]' : 'mr-[6px]'}">
  ${box('w-[23px] bg-[#f6b33c] ' + (drum ? 'mr-[3px]' : 'mr-[5px]'), spk, 'Activate ' + n)}${box('w-[23px] bg-[#b4b4b4] mr-[5px]', 'S', 'Solo ' + n)}${swap}
  <svg class="ml-1" width="8" height="22"><path d="M0 0h3v1H0zM5 0h3v1H5zM0 3h3v19H0zM5 3h3v19H5z" fill="#1a1a1a"/></svg></div>`;
$('chains1').className = 'grid h-[55px] grid-rows-2';
$('chains1').innerHTML = chain('WORSHIP P...', 'C') + chain('LO FI', 'C', true);
$('chains2').className = 'grid h-[193px] grid-rows-7';
$('chains2').innerHTML = [['OS_VV2_sna...', 'C'], ['MA_LOFI_Cl...', 'C'], ['MA_LOFI_Ki...', 'C'], ['KMRBI_LHN...', '10L'], ['KMRBI_LHN...', '10R', true], ['RKU_BNT_h...', 'C'], ['KSHMR_Sub...', 'C']].map(([n, p, s]) => chain(n, p, s, true)).join('');

/* chain selector zones, 128 columns */
const Z = n => (n / 128 * 100) + '%';
let z = '<div class="absolute inset-x-0 top-11 bottom-0 border-t border-l border-[#505050] bg-[#ababab]"></div><i class="absolute left-0 top-[6px] h-[31px] w-[6px] bg-[#7fddf5]"></i>';
for (const n of [0, 8, 16, 24, 32, 40, 48, 56, 64, 72, 80, 88, 96, 104, 112, 120, 127]) {
  z += `<i class="absolute top-[45px] bottom-0 bg-[#909090]" style="left:${Z(n)};width:${Z(1)}"></i><i class="absolute top-[38px] h-[6px] bg-[#505050]" style="left:${Z(n)};width:${Z(1)}"></i>`;
  z += `<span class="absolute top-[17px] ${n === 127 ? '-translate-x-[21px]' : n ? '-translate-x-1/2' : '-translate-x-px'}" style="left:${Z(n + .5)}">${n}</span>`;
}
z += '<i class="absolute inset-x-0 top-[71px] h-px bg-[#505050]"></i><i class="absolute inset-x-0 top-[99px] h-px bg-[#505050]"></i><span class="absolute top-[9px] left-[1px] size-2 rounded-full border border-black bg-[#e5573f]"></span>';
z += `<svg class="absolute top-12" style="left:${Z(1)}" width="6" height="22"><path d="M.500 .500h5v5h-5z" fill="#fff" stroke="#000"/><path d="M.500 7.500h5v13h-5z" fill="#3c68d8" stroke="#000"/></svg><svg class="absolute top-[76px]" style="left:${Z(2)}" width="6" height="22"><path d="M.500 .500h5v5h-5z" fill="#fff" stroke="#000"/><path d="M.500 7.500h5v13h-5z" fill="#3c68d8" stroke="#000"/></svg>`;
$('zones').innerHTML = z;

/* pad overview */
let pm = '';
const lit = ['15,0', '15,1', '16,0', '16,1', '16,3', '18,2', '19,2'];
for (let y = 0; y < 32; y++) for (let x = 0; x < 4; x++) {
  const dark = Math.floor((y + 1) / 4) % 2 === 1;
  pm += `<rect x="${1.5 + x * 7.25}" y="${1 + y * 7.25}" width="6" height="6" fill="${lit.includes(y + ',' + x) ? '#dcdcdc' : dark ? '#505050' : '#ababab'}"/>`;
}
pm += '<rect x=".5" y="137.500" width="29" height="30" fill="none" stroke="#505050"/>';
$('padmap').innerHTML = pm;

$('pads').innerHTML = ['C2', 'C#2', '*', 'D#2', 'G#1', 'A1', 'A#1', 'B1', 'E1', 'F1', 'F#1', 'G1', 'C1', 'C#1', 'D1', 'D#1'].map(p => p === '*'
  ? `<div class="flex flex-col overflow-hidden rounded-md border border-[#505050]"><span class="flex-1 border-b border-[#505050] bg-[#dcdcdc] pt-[2px] text-[15px] leading-[15px]">OS_VV2_s<br>nare_cha</span><div class="flex h-5 divide-x divide-[#505050]"><button class="w-6 leading-none">M</button><button aria-label="Preview pad" class="flex flex-1 items-center justify-center"><svg width="12" height="13"><path d="M0 0l12 6.500L0 13z" fill="#6e6e6e"/></svg></button><button class="w-6 leading-none">S</button></div></div>`
  : `<button class="flex items-start justify-center rounded-md border border-[#505050]">${p}</button>`).join('');

const small = (w, l) => `<div class="relative flex h-[19px] ${w} items-center border border-[#505050]"><select aria-label="${l}" class="size-full appearance-none"><option></option></select><span class="pointer-events-none absolute right-[3px]">${caret()}</span></div>`;
$('filtersel').innerHTML = small('w-[58px]', 'Filter type') + small('w-[58px]', 'Filter circuit');
$('lfosel').innerHTML = small('w-[62px]', 'LFO waveform');

/* waveform: drawn transient followed by a low tail */
let d = 'M3 66L4 51 5 97 7 20 10 123 12 12 14 105 16 41 17 85 20 44 22 90 24 45 26 85 29 50 31 81 33 50 36 82 39 51 40 73 41 78 45 57 49 70 53 63';
for (let x = 55; x < 467; x += 2) {
  const e = 1.5 + 2 * Math.abs(Math.sin(x / 29)) + 1.5 * Math.abs(Math.sin(x / 11)) + (x > 300 ? 1 : 0) + (Math.abs(x - 181) < 5 ? 2 : 0) + (Math.abs(x - 456) < 7 ? 3 : 0);
  d += ` ${x} ${(66 - (x < 72 ? 1 : e * .8)).toFixed(1)} ${x + 1} ${(66 + (x < 72 ? 1 : e * .8)).toFixed(1)}`;
}
let wv = '<path d="M4 50L14 44 36 56 42 62 42 70 34 76 20 82 8 90 4 80z" fill="#f6b33c"/><path d="' + d + '" fill="none" stroke="#f6b33c" stroke-width="1.500" stroke-linejoin="round"/>';
for (let i = 1; i < 13; i++) wv += `<path d="M${i * 38}.500 ${i % 5 ? 125 : 116}V131" stroke="#7f9fa6"/>`;
wv += '<g fill="#8fadb3"><text x="4" y="122">0:00</text><text x="193" y="122">0:00:050</text><text x="383" y="122">0:00:100</text></g><path d="M0 1l13 7-13 7z" fill="#a0a0a0" stroke="#222"/>';
$('wave').innerHTML = wv;
</script>
</body>
</html>
